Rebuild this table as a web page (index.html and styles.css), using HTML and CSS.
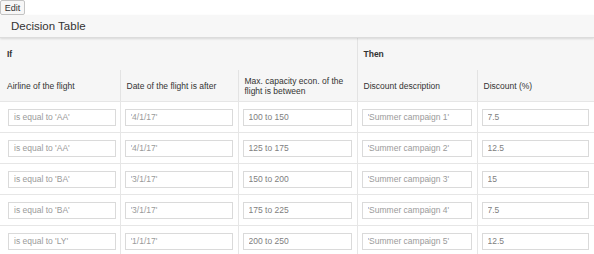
FILE: index.html
```html
<!DOCTYPE html>
<html>
<head>
<meta charset="utf-8">
<link rel="stylesheet" href="styles.css">
</head>
<body>
<button class="edit">Edit</button>
<div class="title">Decision Table</div>
<table class="dt">
  <colgroup>
    <col class="c1"><col class="c2"><col class="c3"><col class="c4"><col class="c5">
  </colgroup>
  <thead>
    <tr class="group">
      <th colspan="3" class="grp">If</th>
      <th colspan="2" class="grp sep">Then</th>
    </tr>
    <tr class="cols">
      <th>Airline of the flight</th>
      <th class="sep">Date of the flight is after</th>
      <th class="sep">Max. capacity econ. of the flight is between</th>
      <th class="sep">Discount description</th>
      <th class="sep">Discount (%)</th>
    </tr>
  </thead>
  <tbody>
    <tr>
      <td><input class="in" value="is equal to 'AA'" readonly></td>
      <td><input class="in" value="'4/1/17'" readonly></td>
      <td><input class="in dark" value="100 to 150" readonly></td>
      <td><input class="in" value="'Summer campaign 1'" readonly></td>
      <td><input class="in dark" value="7.5" readonly></td>
    </tr>
    <tr>
      <td><input class="in" value="is equal to 'AA'" readonly></td>
      <td><input class="in" value="'4/1/17'" readonly></td>
      <td><input class="in dark" value="125 to 175" readonly></td>
      <td><input class="in" value="'Summer campaign 2'" readonly></td>
      <td><input class="in dark" value="12.5" readonly></td>
    </tr>
    <tr>
      <td><input class="in" value="is equal to 'BA'" readonly></td>
      <td><input class="in" value="'3/1/17'" readonly></td>
      <td><input class="in dark" value="150 to 200" readonly></td>
      <td><input class="in" value="'Summer campaign 3'" readonly></td>
      <td><input class="in dark" value="15" readonly></td>
    </tr>
    <tr>
      <td><input class="in" value="is equal to 'BA'" readonly></td>
      <td><input class="in" value="'3/1/17'" readonly></td>
      <td><input class="in dark" value="175 to 225" readonly></td>
      <td><input class="in" value="'Summer campaign 4'" readonly></td>
      <td><input class="in dark" value="7.5" readonly></td>
    </tr>
    <tr>
      <td><input class="in" value="is equal to 'LY'" readonly></td>
      <td><input class="in" value="'1/1/17'" readonly></td>
      <td><input class="in dark" value="200 to 250" readonly></td>
      <td><input class="in" value="'Summer campaign 5'" readonly></td>
      <td><input class="in dark" value="12.5" readonly></td>
    </tr>
  </tbody>
</table>
</body>
</html>
```

FILE: styles.css
```css
html, body {
  margin: 0;
  padding: 0;
  background: #ffffff;
  font-family: "Liberation Sans", Arial, sans-serif;
  color: #333333;
}

.edit {
  display: block;
  height: 15px;
  width: 25px;
  margin: 0;
  padding: 0;
  font-family: "Liberation Sans", Arial, sans-serif;
  font-size: 9px;
  color: #333333;
  background: #f7f7f7;
  border: 1px solid #c4c4c4;
  border-radius: 2px;
}

.title {
  height: 22px;
  line-height: 22px;
  padding-left: 11px;
  font-size: 11.5px;
  color: #333333;
  background: #f7f7f7;
  border-bottom: 1px solid #dcdcdc;
  box-shadow: 0 1px 2px rgba(0, 0, 0, 0.12);
  position: relative;
  z-index: 1;
}

.dt {
  width: 594px;
  border-collapse: collapse;
  table-layout: fixed;
}

.c1 { width: 120px; }
.c2 { width: 118px; }
.c3 { width: 119px; }
.c4 { width: 120px; }
.c5 { width: 117px; }

.dt thead {
  background: #f6f6f6;
}

.dt th {
  text-align: left;
  font-size: 8.5px;
  font-weight: normal;
  color: #333333;
  padding: 0 6px;
  line-height: 10px;
  vertical-align: middle;
}

.dt th:first-child {
  padding-left: 7px;
}

.dt .group th {
  height: 32px;
  font-weight: bold;
  font-size: 8.5px;
}

.dt .cols th {
  height: 31px;
  border-bottom: 1px solid #e6e6e6;
}

.dt .sep {
  border-left: 1px solid #e3e3e3;
}

.dt td {
  height: 30px;
  padding: 0 5px 0 4px;
  border-top: 1px solid #e6e6e6;
  border-left: 1px solid #e6e6e6;
  vertical-align: middle;
}

.dt td:first-child {
  border-left: none;
  padding-left: 8px;
  padding-right: 4px;
}

.in {
  display: block;
  box-sizing: border-box;
  width: 100%;
  height: 17px;
  margin: 0;
  padding: 0 5px;
  font-family: "Liberation Sans", Arial, sans-serif;
  font-size: 8.5px;
  color: #9a9a9a;
  background: #ffffff;
  border: 1px solid #dadada;
  border-radius: 0;
  outline: none;
}

.in.dark {
  color: #808080;
}
```
